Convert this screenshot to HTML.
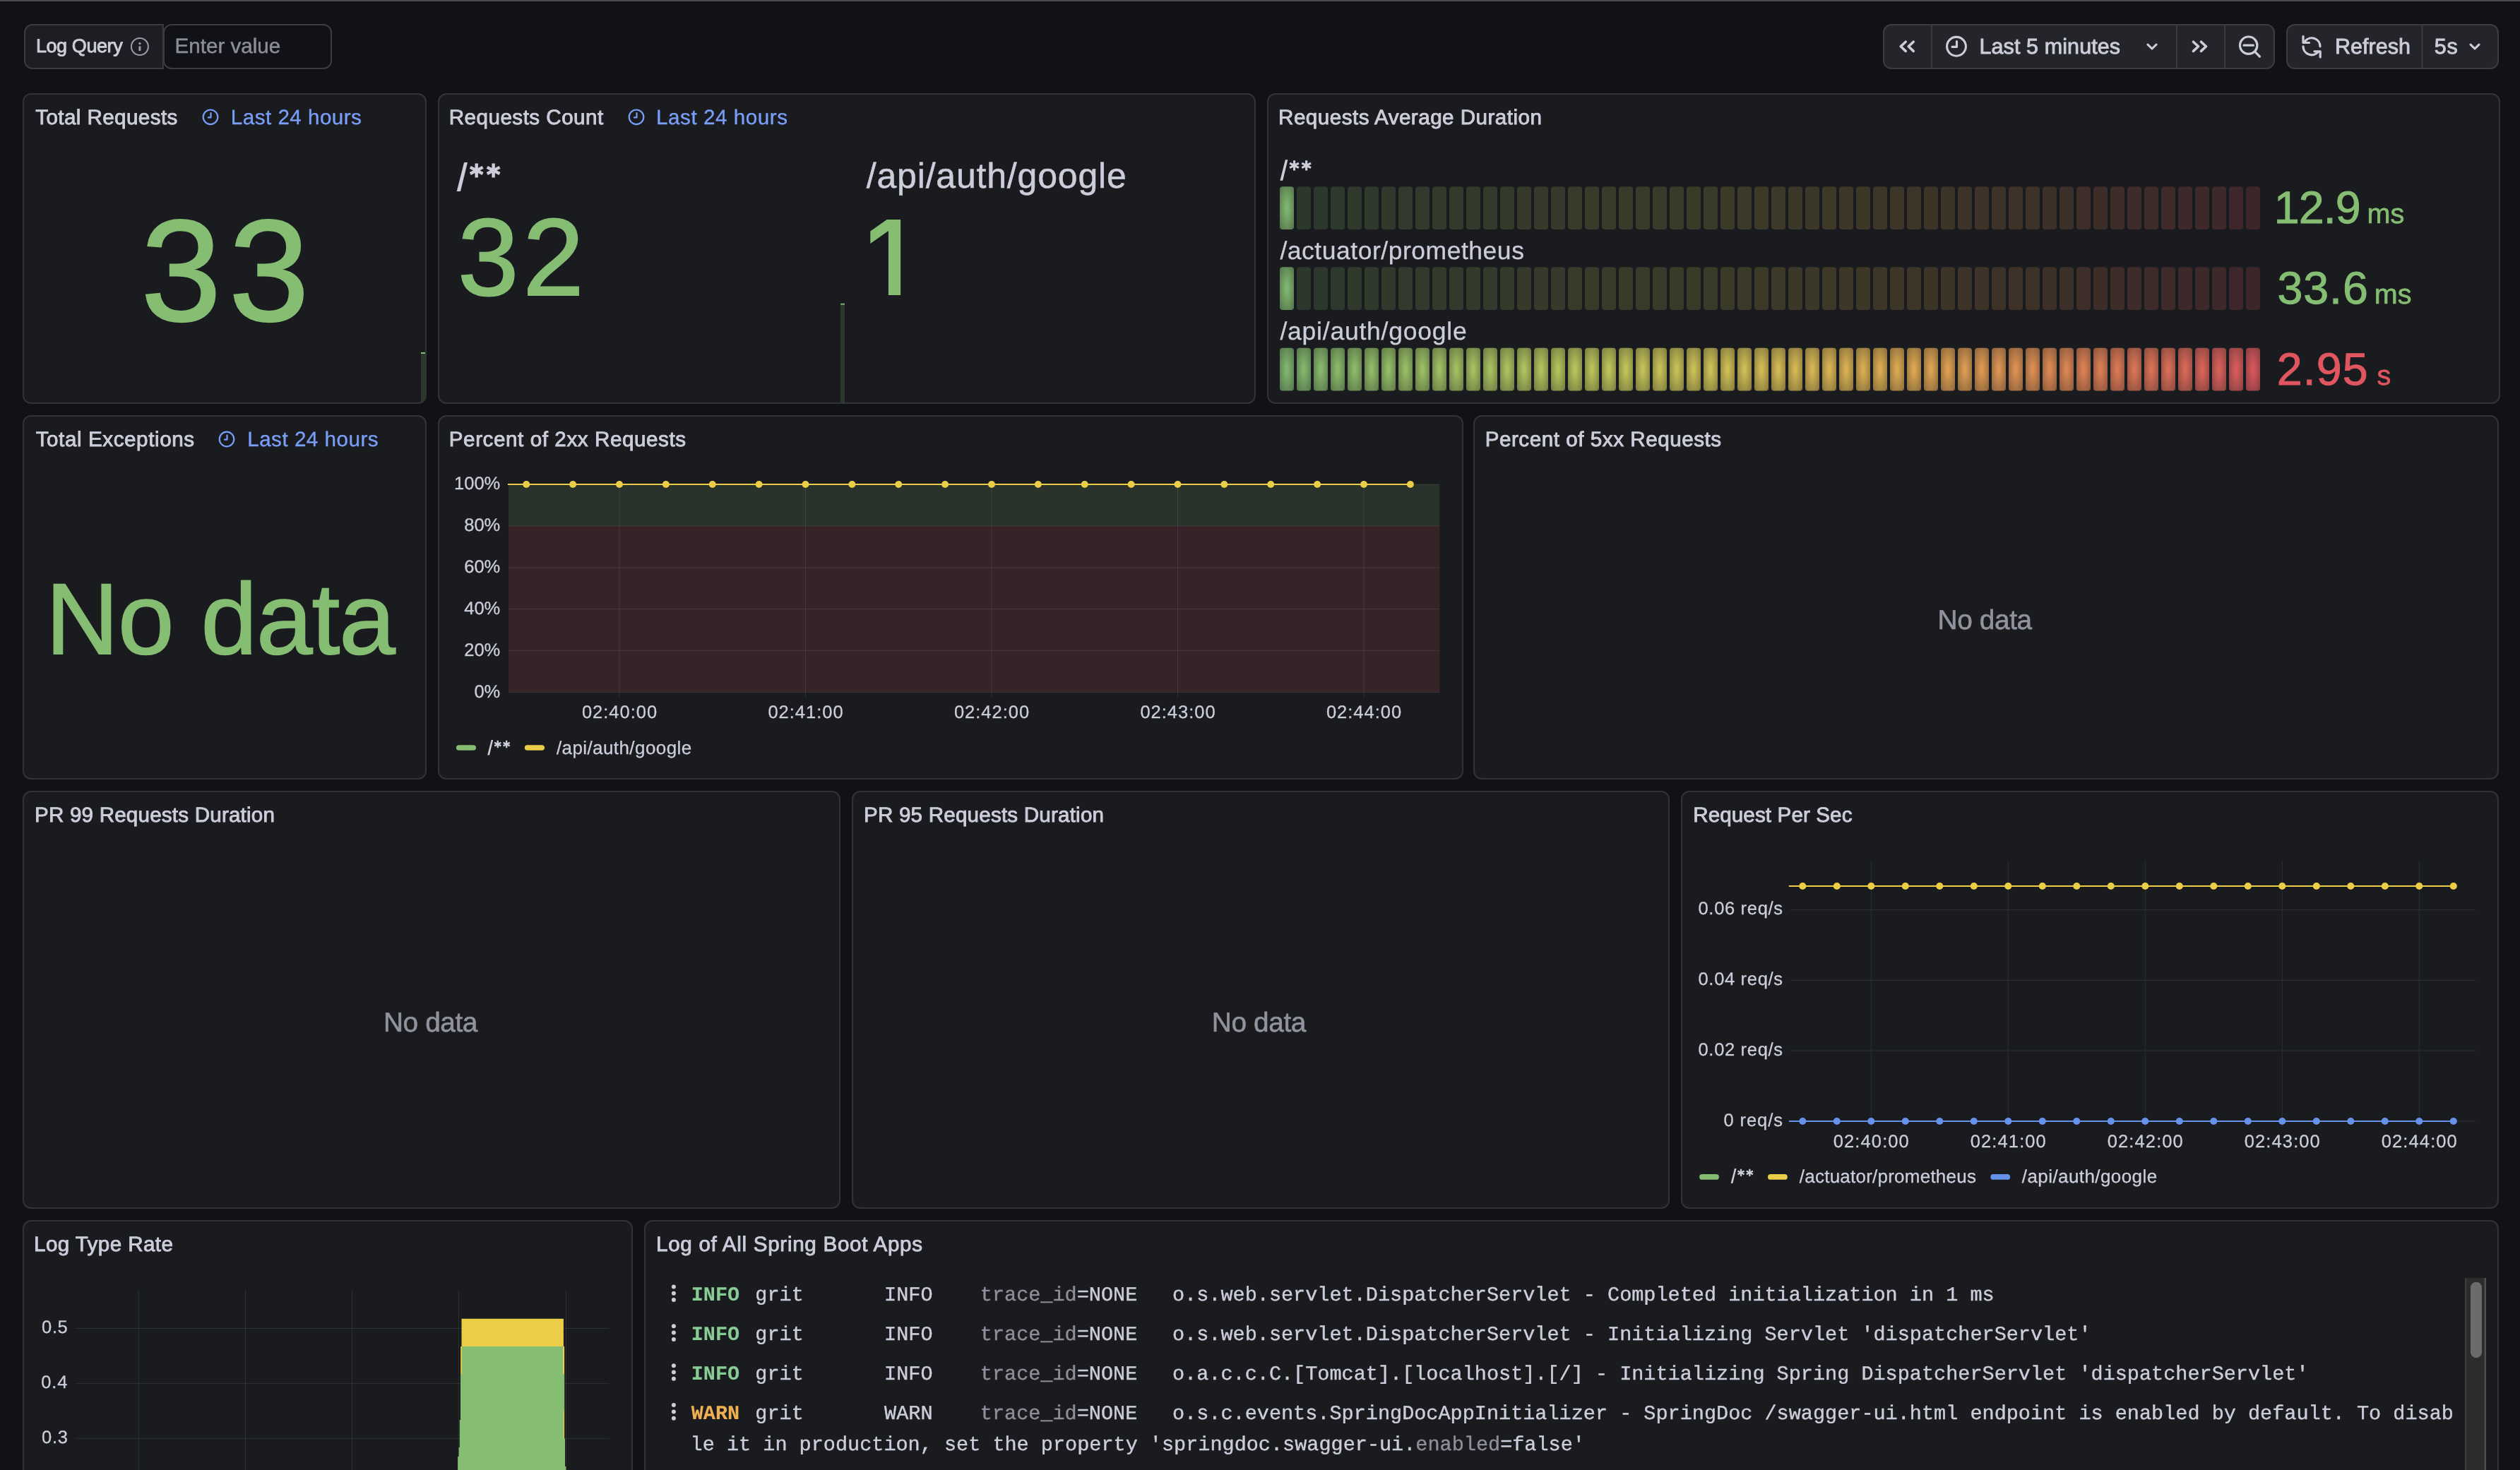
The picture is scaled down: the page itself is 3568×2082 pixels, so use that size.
<!DOCTYPE html>
<html><head><meta charset="utf-8"><title>Grafana Dashboard</title>
<style>html,body{margin:0;padding:0;background:#111217;overflow:hidden;width:3568px;height:2082px}svg{display:block;width:100vw;height:auto;will-change:transform}</style>
</head><body>
<svg width="3568" height="2082" viewBox="0 0 3568 2082" text-rendering="geometricPrecision">
<rect x="0" y="0" width="3568" height="2082" fill="#111217"/>
<rect x="0" y="0" width="3568" height="2" fill="#4b4d4c"/>
<rect x="0" y="2" width="3568" height="1" fill="#0c0d10"/>
<path d="M46 35 H230.8 V96.9 H46 A11 11 0 0 1 35 85.9 V46 A11 11 0 0 1 46 35 Z" fill="#1d1e23" stroke="#3a3c41" stroke-width="2"/>
<rect x="232.00" y="35.00" width="237.00" height="62.00" fill="#111217" rx="11" stroke="#3a3c41" stroke-width="2" />
<text x="50.89" y="74.35" font-family='"Liberation Sans", sans-serif' font-size="27.00" font-weight="normal" fill="#ccccdb" textLength="122.77" lengthAdjust="spacing" stroke="#ccccdb" stroke-width="0.9" >Log Query</text>
<circle cx="197.9" cy="66" r="12" fill="none" stroke="#9b9ba5" stroke-width="2"/>
<circle cx="197.9" cy="61.6" r="1.7" fill="#9b9ba5"/>
<rect x="196.4" y="65.3" width="3" height="7" rx="1.2" fill="#9b9ba5"/>
<text x="247.58" y="75.40" font-family='"Liberation Sans", sans-serif' font-size="29.50" font-weight="normal" fill="#8c8d97" textLength="149.53" lengthAdjust="spacing" stroke="#8c8d97" stroke-width="0.5" >Enter value</text>
<rect x="2667.00" y="35.00" width="553.00" height="62.00" fill="#23252a" rx="11" stroke="#3a3c41" stroke-width="2" />
<rect x="2734.00" y="35.00" width="2.00" height="62.00" fill="#3a3c41" />
<rect x="3081.00" y="35.00" width="2.00" height="62.00" fill="#3a3c41" />
<rect x="3149.00" y="35.00" width="2.00" height="62.00" fill="#3a3c41" />
<path d="M2698.2 59.199999999999996 L2691.2 65.8 L2698.2 72.39999999999999" fill="none" stroke="#ccccdb" stroke-width="3.6" stroke-linecap="round" stroke-linejoin="round"/>
<path d="M2709.2 59.199999999999996 L2702.2 65.8 L2709.2 72.39999999999999" fill="none" stroke="#ccccdb" stroke-width="3.6" stroke-linecap="round" stroke-linejoin="round"/>
<path d="M3105.5 59.199999999999996 L3112.5 65.8 L3105.5 72.39999999999999" fill="none" stroke="#ccccdb" stroke-width="3.6" stroke-linecap="round" stroke-linejoin="round"/>
<path d="M3116.5 59.199999999999996 L3123.5 65.8 L3116.5 72.39999999999999" fill="none" stroke="#ccccdb" stroke-width="3.6" stroke-linecap="round" stroke-linejoin="round"/>
<circle cx="2770" cy="65.8" r="13.4" fill="none" stroke="#ccccdb" stroke-width="3.1"/>
<path d="M2770.5 58.42999999999999 V66.39999999999999 H2763.97" fill="none" stroke="#ccccdb" stroke-width="3.1" stroke-linecap="round" stroke-linejoin="round"/>
<text x="2802.50" y="76.00" font-family='"Liberation Sans", sans-serif' font-size="30.50" font-weight="normal" fill="#ccccdb" textLength="199.60" lengthAdjust="spacing" stroke="#ccccdb" stroke-width="0.9" >Last 5 minutes</text>
<path d="M3041 63.2 L3047 69 L3053 63.2" fill="none" stroke="#ccccdb" stroke-width="3.1" stroke-linecap="round" stroke-linejoin="round"/>
<circle cx="3183.7" cy="64.2" r="12.2" fill="none" stroke="#ccccdb" stroke-width="3.2"/>
<path d="M3177 64.2 H3190.4 M3192.6 73.2 L3199.4 80" fill="none" stroke="#ccccdb" stroke-width="3.2" stroke-linecap="round"/>
<rect x="3238.00" y="35.00" width="299.00" height="62.00" fill="#23252a" rx="11" stroke="#3a3c41" stroke-width="2" />
<rect x="3428.50" y="35.00" width="2.00" height="62.00" fill="#3a3c41" />
<path d="M3263.8 58.1 A12 12 0 0 1 3285 65.8 M3261 65.8 A12 12 0 0 0 3282.2 73.5" fill="none" stroke="#ccccdb" stroke-width="3.2" stroke-linecap="round"/>
<path d="M3261 51.5 V60.5 H3269.5 M3277 72.8 H3285.2 V81" fill="none" stroke="#ccccdb" stroke-width="3.2" stroke-linecap="round" stroke-linejoin="round"/>
<text x="3306.00" y="76.00" font-family='"Liberation Sans", sans-serif' font-size="30.50" font-weight="normal" fill="#ccccdb" textLength="106.98" lengthAdjust="spacing" stroke="#ccccdb" stroke-width="0.9" >Refresh</text>
<text x="3446.78" y="76.00" font-family='"Liberation Sans", sans-serif' font-size="30.50" font-weight="normal" fill="#ccccdb" textLength="32.92" lengthAdjust="spacing" stroke="#ccccdb" stroke-width="0.9" >5s</text>
<path d="M3498 63.2 L3504 69 L3510 63.2" fill="none" stroke="#ccccdb" stroke-width="3.1" stroke-linecap="round" stroke-linejoin="round"/>
<rect x="33.00" y="133.00" width="570.00" height="438.00" fill="#191b1f" rx="11" stroke="#323338" stroke-width="2" />
<text x="50.24" y="176.30" font-family='"Liberation Sans", sans-serif' font-size="29.60" font-weight="normal" fill="#ccccdb" textLength="201.13" lengthAdjust="spacing" stroke="#ccccdb" stroke-width="0.9" >Total Requests</text>
<circle cx="298" cy="165.8" r="10.3" fill="none" stroke="#799ef8" stroke-width="2.2"/>
<path d="M298.5 160.13500000000002 V166.4 H294.91" fill="none" stroke="#799ef8" stroke-width="2.2" stroke-linecap="round" stroke-linejoin="round"/>
<text x="326.87" y="176.30" font-family='"Liberation Sans", sans-serif' font-size="29.60" font-weight="normal" fill="#799ef8" textLength="185.00" lengthAdjust="spacing" stroke="#799ef8" stroke-width="0.35" >Last 24 hours</text>
<text x="199.62" y="454.00" font-family='"Liberation Sans", sans-serif' font-size="204.40" font-weight="normal" fill="#85bd72" textLength="238.17" lengthAdjust="spacing" stroke="#85bd72" stroke-width="2.4" >33</text>
<clipPath id="p1c"><rect x="34" y="134" width="568" height="436" rx="10"/></clipPath>
<g clip-path="url(#p1c)">
<rect x="596.00" y="500.50" width="6.00" height="72.00" fill="#85bd72" fill-opacity="0.18"/>
<rect x="596.00" y="499.00" width="6.00" height="2.00" fill="#85bd72" />
</g>
<rect x="621.00" y="133.00" width="1156.00" height="438.00" fill="#191b1f" rx="11" stroke="#323338" stroke-width="2" />
<text x="635.77" y="176.30" font-family='"Liberation Sans", sans-serif' font-size="29.60" font-weight="normal" fill="#ccccdb" textLength="218.44" lengthAdjust="spacing" stroke="#ccccdb" stroke-width="0.9" >Requests Count</text>
<circle cx="901" cy="165.8" r="10.3" fill="none" stroke="#799ef8" stroke-width="2.2"/>
<path d="M901.5 160.13500000000002 V166.4 H897.91" fill="none" stroke="#799ef8" stroke-width="2.2" stroke-linecap="round" stroke-linejoin="round"/>
<text x="929.07" y="176.30" font-family='"Liberation Sans", sans-serif' font-size="29.60" font-weight="normal" fill="#799ef8" textLength="186.00" lengthAdjust="spacing" stroke="#799ef8" stroke-width="0.35" >Last 24 hours</text>
<path d="M657.10 230.00 L662.00 230.00 L652.00 271.00 L646.70 271.00 Z" fill="#ccccdb"/>
<path d="M674.70 231.40 L674.70 251.40 M665.79 236.86 L683.61 245.94 M665.79 245.94 L683.61 236.86 " stroke="#ccccdb" stroke-width="4.40" fill="none"/>
<path d="M698.60 231.40 L698.60 251.40 M689.69 236.86 L707.51 245.94 M689.69 245.94 L707.51 236.86 " stroke="#ccccdb" stroke-width="4.40" fill="none"/>
<text x="1226.80" y="266.20" font-family='"Liberation Sans", sans-serif' font-size="50.00" font-weight="normal" fill="#ccccdb" textLength="367.92" lengthAdjust="spacing" stroke="#ccccdb" stroke-width="0.5" >/api/auth/google</text>
<text x="647.88" y="417.80" font-family='"Liberation Sans", sans-serif' font-size="155.50" font-weight="normal" fill="#85bd72" textLength="178.84" lengthAdjust="spacing" stroke="#85bd72" stroke-width="2.0" >32</text>
<path d="M1232.3 327.6 L1255.7 310.9 H1275.1 V418.1 H1257.9 V327 L1232.3 344.9 Z" fill="#85bd72"/>
<rect x="1190.00" y="431.20" width="6.00" height="139.00" fill="#85bd72" fill-opacity="0.18"/>
<rect x="1190.00" y="429.80" width="6.00" height="1.80" fill="#85bd72" />
<rect x="1795.00" y="133.00" width="1744.00" height="438.00" fill="#191b1f" rx="11" stroke="#323338" stroke-width="2" />
<text x="1810.07" y="176.30" font-family='"Liberation Sans", sans-serif' font-size="29.60" font-weight="normal" fill="#ccccdb" textLength="372.85" lengthAdjust="spacing" stroke="#ccccdb" stroke-width="0.9" >Requests Average Duration</text>
<path d="M1819.87 226.20 L1823.39 226.20 L1816.21 255.64 L1812.40 255.64 Z" fill="#ccccdb"/>
<path d="M1832.50 227.21 L1832.50 241.57 M1826.11 231.13 L1838.90 237.64 M1826.11 237.64 L1838.90 231.13 " stroke="#ccccdb" stroke-width="3.16" fill="none"/>
<path d="M1849.66 227.21 L1849.66 241.57 M1843.27 231.13 L1856.06 237.64 M1843.27 237.64 L1856.06 231.13 " stroke="#ccccdb" stroke-width="3.16" fill="none"/>
<rect x="1812.00" y="264.30" width="20.00" height="60.60" fill="url(#g0_0)" rx="4" />
<rect x="1836.00" y="264.30" width="20.00" height="60.60" fill="rgb(136,190,113)" rx="4" fill-opacity="0.18"/>
<rect x="1860.00" y="264.30" width="20.00" height="60.60" fill="rgb(140,191,112)" rx="4" fill-opacity="0.18"/>
<rect x="1884.00" y="264.30" width="20.00" height="60.60" fill="rgb(143,192,110)" rx="4" fill-opacity="0.18"/>
<rect x="1908.00" y="264.30" width="20.00" height="60.60" fill="rgb(147,193,108)" rx="4" fill-opacity="0.18"/>
<rect x="1932.00" y="264.30" width="20.00" height="60.60" fill="rgb(150,194,107)" rx="4" fill-opacity="0.18"/>
<rect x="1956.00" y="264.30" width="20.00" height="60.60" fill="rgb(154,196,105)" rx="4" fill-opacity="0.18"/>
<rect x="1980.00" y="264.30" width="20.00" height="60.60" fill="rgb(158,197,104)" rx="4" fill-opacity="0.18"/>
<rect x="2004.00" y="264.30" width="20.00" height="60.60" fill="rgb(162,198,103)" rx="4" fill-opacity="0.18"/>
<rect x="2028.00" y="264.30" width="20.00" height="60.60" fill="rgb(165,199,102)" rx="4" fill-opacity="0.18"/>
<rect x="2052.00" y="264.30" width="20.00" height="60.60" fill="rgb(169,199,100)" rx="4" fill-opacity="0.18"/>
<rect x="2076.00" y="264.30" width="20.00" height="60.60" fill="rgb(172,200,99)" rx="4" fill-opacity="0.18"/>
<rect x="2100.00" y="264.30" width="20.00" height="60.60" fill="rgb(175,201,98)" rx="4" fill-opacity="0.18"/>
<rect x="2124.00" y="264.30" width="20.00" height="60.60" fill="rgb(179,201,97)" rx="4" fill-opacity="0.18"/>
<rect x="2148.00" y="264.30" width="20.00" height="60.60" fill="rgb(182,202,97)" rx="4" fill-opacity="0.18"/>
<rect x="2172.00" y="264.30" width="20.00" height="60.60" fill="rgb(186,202,95)" rx="4" fill-opacity="0.18"/>
<rect x="2196.00" y="264.30" width="20.00" height="60.60" fill="rgb(188,202,94)" rx="4" fill-opacity="0.18"/>
<rect x="2220.00" y="264.30" width="20.00" height="60.60" fill="rgb(192,203,94)" rx="4" fill-opacity="0.18"/>
<rect x="2244.00" y="264.30" width="20.00" height="60.60" fill="rgb(195,203,92)" rx="4" fill-opacity="0.18"/>
<rect x="2268.00" y="264.30" width="20.00" height="60.60" fill="rgb(198,203,92)" rx="4" fill-opacity="0.18"/>
<rect x="2292.00" y="264.30" width="20.00" height="60.60" fill="rgb(201,203,91)" rx="4" fill-opacity="0.18"/>
<rect x="2316.00" y="264.30" width="20.00" height="60.60" fill="rgb(204,202,91)" rx="4" fill-opacity="0.18"/>
<rect x="2340.00" y="264.30" width="20.00" height="60.60" fill="rgb(206,201,90)" rx="4" fill-opacity="0.18"/>
<rect x="2364.00" y="264.30" width="20.00" height="60.60" fill="rgb(208,201,89)" rx="4" fill-opacity="0.18"/>
<rect x="2388.00" y="264.30" width="20.00" height="60.60" fill="rgb(211,200,89)" rx="4" fill-opacity="0.18"/>
<rect x="2412.00" y="264.30" width="20.00" height="60.60" fill="rgb(213,200,88)" rx="4" fill-opacity="0.18"/>
<rect x="2436.00" y="264.30" width="20.00" height="60.60" fill="rgb(215,198,87)" rx="4" fill-opacity="0.18"/>
<rect x="2460.00" y="264.30" width="20.00" height="60.60" fill="rgb(217,197,87)" rx="4" fill-opacity="0.18"/>
<rect x="2484.00" y="264.30" width="20.00" height="60.60" fill="rgb(219,195,87)" rx="4" fill-opacity="0.18"/>
<rect x="2508.00" y="264.30" width="20.00" height="60.60" fill="rgb(220,193,86)" rx="4" fill-opacity="0.18"/>
<rect x="2532.00" y="264.30" width="20.00" height="60.60" fill="rgb(222,191,86)" rx="4" fill-opacity="0.18"/>
<rect x="2556.00" y="264.30" width="20.00" height="60.60" fill="rgb(223,190,86)" rx="4" fill-opacity="0.18"/>
<rect x="2580.00" y="264.30" width="20.00" height="60.60" fill="rgb(225,187,85)" rx="4" fill-opacity="0.18"/>
<rect x="2604.00" y="264.30" width="20.00" height="60.60" fill="rgb(226,184,85)" rx="4" fill-opacity="0.18"/>
<rect x="2628.00" y="264.30" width="20.00" height="60.60" fill="rgb(226,181,84)" rx="4" fill-opacity="0.18"/>
<rect x="2652.00" y="264.30" width="20.00" height="60.60" fill="rgb(227,178,84)" rx="4" fill-opacity="0.18"/>
<rect x="2676.00" y="264.30" width="20.00" height="60.60" fill="rgb(228,176,84)" rx="4" fill-opacity="0.18"/>
<rect x="2700.00" y="264.30" width="20.00" height="60.60" fill="rgb(229,173,84)" rx="4" fill-opacity="0.18"/>
<rect x="2724.00" y="264.30" width="20.00" height="60.60" fill="rgb(229,169,84)" rx="4" fill-opacity="0.18"/>
<rect x="2748.00" y="264.30" width="20.00" height="60.60" fill="rgb(230,165,84)" rx="4" fill-opacity="0.18"/>
<rect x="2772.00" y="264.30" width="20.00" height="60.60" fill="rgb(229,162,84)" rx="4" fill-opacity="0.18"/>
<rect x="2796.00" y="264.30" width="20.00" height="60.60" fill="rgb(230,158,84)" rx="4" fill-opacity="0.18"/>
<rect x="2820.00" y="264.30" width="20.00" height="60.60" fill="rgb(229,154,85)" rx="4" fill-opacity="0.18"/>
<rect x="2844.00" y="264.30" width="20.00" height="60.60" fill="rgb(230,151,85)" rx="4" fill-opacity="0.18"/>
<rect x="2868.00" y="264.30" width="20.00" height="60.60" fill="rgb(229,147,85)" rx="4" fill-opacity="0.18"/>
<rect x="2892.00" y="264.30" width="20.00" height="60.60" fill="rgb(229,142,85)" rx="4" fill-opacity="0.18"/>
<rect x="2916.00" y="264.30" width="20.00" height="60.60" fill="rgb(229,139,86)" rx="4" fill-opacity="0.18"/>
<rect x="2940.00" y="264.30" width="20.00" height="60.60" fill="rgb(229,134,86)" rx="4" fill-opacity="0.18"/>
<rect x="2964.00" y="264.30" width="20.00" height="60.60" fill="rgb(228,130,87)" rx="4" fill-opacity="0.18"/>
<rect x="2988.00" y="264.30" width="20.00" height="60.60" fill="rgb(228,125,87)" rx="4" fill-opacity="0.18"/>
<rect x="3012.00" y="264.30" width="20.00" height="60.60" fill="rgb(228,121,88)" rx="4" fill-opacity="0.18"/>
<rect x="3036.00" y="264.30" width="20.00" height="60.60" fill="rgb(227,117,89)" rx="4" fill-opacity="0.18"/>
<rect x="3060.00" y="264.30" width="20.00" height="60.60" fill="rgb(226,113,90)" rx="4" fill-opacity="0.18"/>
<rect x="3084.00" y="264.30" width="20.00" height="60.60" fill="rgb(226,108,90)" rx="4" fill-opacity="0.18"/>
<rect x="3108.00" y="264.30" width="20.00" height="60.60" fill="rgb(225,103,92)" rx="4" fill-opacity="0.18"/>
<rect x="3132.00" y="264.30" width="20.00" height="60.60" fill="rgb(225,99,93)" rx="4" fill-opacity="0.18"/>
<rect x="3156.00" y="264.30" width="20.00" height="60.60" fill="rgb(225,95,94)" rx="4" fill-opacity="0.18"/>
<rect x="3180.00" y="264.30" width="20.00" height="60.60" fill="rgb(224,90,95)" rx="4" fill-opacity="0.18"/>
<text x="1812.40" y="367.10" font-family='"Liberation Sans", sans-serif' font-size="35.50" font-weight="normal" fill="#ccccdb" textLength="345.48" lengthAdjust="spacing" stroke="#ccccdb" stroke-width="0.3" >/actuator/prometheus</text>
<rect x="1812.00" y="378.30" width="20.00" height="60.60" fill="url(#g1_0)" rx="4" />
<rect x="1836.00" y="378.30" width="20.00" height="60.60" fill="rgb(136,190,113)" rx="4" fill-opacity="0.18"/>
<rect x="1860.00" y="378.30" width="20.00" height="60.60" fill="rgb(140,191,112)" rx="4" fill-opacity="0.18"/>
<rect x="1884.00" y="378.30" width="20.00" height="60.60" fill="rgb(143,192,110)" rx="4" fill-opacity="0.18"/>
<rect x="1908.00" y="378.30" width="20.00" height="60.60" fill="rgb(147,193,108)" rx="4" fill-opacity="0.18"/>
<rect x="1932.00" y="378.30" width="20.00" height="60.60" fill="rgb(150,194,107)" rx="4" fill-opacity="0.18"/>
<rect x="1956.00" y="378.30" width="20.00" height="60.60" fill="rgb(154,196,105)" rx="4" fill-opacity="0.18"/>
<rect x="1980.00" y="378.30" width="20.00" height="60.60" fill="rgb(158,197,104)" rx="4" fill-opacity="0.18"/>
<rect x="2004.00" y="378.30" width="20.00" height="60.60" fill="rgb(162,198,103)" rx="4" fill-opacity="0.18"/>
<rect x="2028.00" y="378.30" width="20.00" height="60.60" fill="rgb(165,199,102)" rx="4" fill-opacity="0.18"/>
<rect x="2052.00" y="378.30" width="20.00" height="60.60" fill="rgb(169,199,100)" rx="4" fill-opacity="0.18"/>
<rect x="2076.00" y="378.30" width="20.00" height="60.60" fill="rgb(172,200,99)" rx="4" fill-opacity="0.18"/>
<rect x="2100.00" y="378.30" width="20.00" height="60.60" fill="rgb(175,201,98)" rx="4" fill-opacity="0.18"/>
<rect x="2124.00" y="378.30" width="20.00" height="60.60" fill="rgb(179,201,97)" rx="4" fill-opacity="0.18"/>
<rect x="2148.00" y="378.30" width="20.00" height="60.60" fill="rgb(182,202,97)" rx="4" fill-opacity="0.18"/>
<rect x="2172.00" y="378.30" width="20.00" height="60.60" fill="rgb(186,202,95)" rx="4" fill-opacity="0.18"/>
<rect x="2196.00" y="378.30" width="20.00" height="60.60" fill="rgb(188,202,94)" rx="4" fill-opacity="0.18"/>
<rect x="2220.00" y="378.30" width="20.00" height="60.60" fill="rgb(192,203,94)" rx="4" fill-opacity="0.18"/>
<rect x="2244.00" y="378.30" width="20.00" height="60.60" fill="rgb(195,203,92)" rx="4" fill-opacity="0.18"/>
<rect x="2268.00" y="378.30" width="20.00" height="60.60" fill="rgb(198,203,92)" rx="4" fill-opacity="0.18"/>
<rect x="2292.00" y="378.30" width="20.00" height="60.60" fill="rgb(201,203,91)" rx="4" fill-opacity="0.18"/>
<rect x="2316.00" y="378.30" width="20.00" height="60.60" fill="rgb(204,202,91)" rx="4" fill-opacity="0.18"/>
<rect x="2340.00" y="378.30" width="20.00" height="60.60" fill="rgb(206,201,90)" rx="4" fill-opacity="0.18"/>
<rect x="2364.00" y="378.30" width="20.00" height="60.60" fill="rgb(208,201,89)" rx="4" fill-opacity="0.18"/>
<rect x="2388.00" y="378.30" width="20.00" height="60.60" fill="rgb(211,200,89)" rx="4" fill-opacity="0.18"/>
<rect x="2412.00" y="378.30" width="20.00" height="60.60" fill="rgb(213,200,88)" rx="4" fill-opacity="0.18"/>
<rect x="2436.00" y="378.30" width="20.00" height="60.60" fill="rgb(215,198,87)" rx="4" fill-opacity="0.18"/>
<rect x="2460.00" y="378.30" width="20.00" height="60.60" fill="rgb(217,197,87)" rx="4" fill-opacity="0.18"/>
<rect x="2484.00" y="378.30" width="20.00" height="60.60" fill="rgb(219,195,87)" rx="4" fill-opacity="0.18"/>
<rect x="2508.00" y="378.30" width="20.00" height="60.60" fill="rgb(220,193,86)" rx="4" fill-opacity="0.18"/>
<rect x="2532.00" y="378.30" width="20.00" height="60.60" fill="rgb(222,191,86)" rx="4" fill-opacity="0.18"/>
<rect x="2556.00" y="378.30" width="20.00" height="60.60" fill="rgb(223,190,86)" rx="4" fill-opacity="0.18"/>
<rect x="2580.00" y="378.30" width="20.00" height="60.60" fill="rgb(225,187,85)" rx="4" fill-opacity="0.18"/>
<rect x="2604.00" y="378.30" width="20.00" height="60.60" fill="rgb(226,184,85)" rx="4" fill-opacity="0.18"/>
<rect x="2628.00" y="378.30" width="20.00" height="60.60" fill="rgb(226,181,84)" rx="4" fill-opacity="0.18"/>
<rect x="2652.00" y="378.30" width="20.00" height="60.60" fill="rgb(227,178,84)" rx="4" fill-opacity="0.18"/>
<rect x="2676.00" y="378.30" width="20.00" height="60.60" fill="rgb(228,176,84)" rx="4" fill-opacity="0.18"/>
<rect x="2700.00" y="378.30" width="20.00" height="60.60" fill="rgb(229,173,84)" rx="4" fill-opacity="0.18"/>
<rect x="2724.00" y="378.30" width="20.00" height="60.60" fill="rgb(229,169,84)" rx="4" fill-opacity="0.18"/>
<rect x="2748.00" y="378.30" width="20.00" height="60.60" fill="rgb(230,165,84)" rx="4" fill-opacity="0.18"/>
<rect x="2772.00" y="378.30" width="20.00" height="60.60" fill="rgb(229,162,84)" rx="4" fill-opacity="0.18"/>
<rect x="2796.00" y="378.30" width="20.00" height="60.60" fill="rgb(230,158,84)" rx="4" fill-opacity="0.18"/>
<rect x="2820.00" y="378.30" width="20.00" height="60.60" fill="rgb(229,154,85)" rx="4" fill-opacity="0.18"/>
<rect x="2844.00" y="378.30" width="20.00" height="60.60" fill="rgb(230,151,85)" rx="4" fill-opacity="0.18"/>
<rect x="2868.00" y="378.30" width="20.00" height="60.60" fill="rgb(229,147,85)" rx="4" fill-opacity="0.18"/>
<rect x="2892.00" y="378.30" width="20.00" height="60.60" fill="rgb(229,142,85)" rx="4" fill-opacity="0.18"/>
<rect x="2916.00" y="378.30" width="20.00" height="60.60" fill="rgb(229,139,86)" rx="4" fill-opacity="0.18"/>
<rect x="2940.00" y="378.30" width="20.00" height="60.60" fill="rgb(229,134,86)" rx="4" fill-opacity="0.18"/>
<rect x="2964.00" y="378.30" width="20.00" height="60.60" fill="rgb(228,130,87)" rx="4" fill-opacity="0.18"/>
<rect x="2988.00" y="378.30" width="20.00" height="60.60" fill="rgb(228,125,87)" rx="4" fill-opacity="0.18"/>
<rect x="3012.00" y="378.30" width="20.00" height="60.60" fill="rgb(228,121,88)" rx="4" fill-opacity="0.18"/>
<rect x="3036.00" y="378.30" width="20.00" height="60.60" fill="rgb(227,117,89)" rx="4" fill-opacity="0.18"/>
<rect x="3060.00" y="378.30" width="20.00" height="60.60" fill="rgb(226,113,90)" rx="4" fill-opacity="0.18"/>
<rect x="3084.00" y="378.30" width="20.00" height="60.60" fill="rgb(226,108,90)" rx="4" fill-opacity="0.18"/>
<rect x="3108.00" y="378.30" width="20.00" height="60.60" fill="rgb(225,103,92)" rx="4" fill-opacity="0.18"/>
<rect x="3132.00" y="378.30" width="20.00" height="60.60" fill="rgb(225,99,93)" rx="4" fill-opacity="0.18"/>
<rect x="3156.00" y="378.30" width="20.00" height="60.60" fill="rgb(225,95,94)" rx="4" fill-opacity="0.18"/>
<rect x="3180.00" y="378.30" width="20.00" height="60.60" fill="rgb(224,90,95)" rx="4" fill-opacity="0.18"/>
<text x="1812.40" y="480.50" font-family='"Liberation Sans", sans-serif' font-size="35.50" font-weight="normal" fill="#ccccdb" textLength="264.38" lengthAdjust="spacing" stroke="#ccccdb" stroke-width="0.3" >/api/auth/google</text>
<rect x="1812.00" y="492.80" width="20.00" height="60.60" fill="url(#g2_0)" rx="4" />
<rect x="1836.00" y="492.80" width="20.00" height="60.60" fill="url(#g2_1)" rx="4" />
<rect x="1860.00" y="492.80" width="20.00" height="60.60" fill="url(#g2_2)" rx="4" />
<rect x="1884.00" y="492.80" width="20.00" height="60.60" fill="url(#g2_3)" rx="4" />
<rect x="1908.00" y="492.80" width="20.00" height="60.60" fill="url(#g2_4)" rx="4" />
<rect x="1932.00" y="492.80" width="20.00" height="60.60" fill="url(#g2_5)" rx="4" />
<rect x="1956.00" y="492.80" width="20.00" height="60.60" fill="url(#g2_6)" rx="4" />
<rect x="1980.00" y="492.80" width="20.00" height="60.60" fill="url(#g2_7)" rx="4" />
<rect x="2004.00" y="492.80" width="20.00" height="60.60" fill="url(#g2_8)" rx="4" />
<rect x="2028.00" y="492.80" width="20.00" height="60.60" fill="url(#g2_9)" rx="4" />
<rect x="2052.00" y="492.80" width="20.00" height="60.60" fill="url(#g2_10)" rx="4" />
<rect x="2076.00" y="492.80" width="20.00" height="60.60" fill="url(#g2_11)" rx="4" />
<rect x="2100.00" y="492.80" width="20.00" height="60.60" fill="url(#g2_12)" rx="4" />
<rect x="2124.00" y="492.80" width="20.00" height="60.60" fill="url(#g2_13)" rx="4" />
<rect x="2148.00" y="492.80" width="20.00" height="60.60" fill="url(#g2_14)" rx="4" />
<rect x="2172.00" y="492.80" width="20.00" height="60.60" fill="url(#g2_15)" rx="4" />
<rect x="2196.00" y="492.80" width="20.00" height="60.60" fill="url(#g2_16)" rx="4" />
<rect x="2220.00" y="492.80" width="20.00" height="60.60" fill="url(#g2_17)" rx="4" />
<rect x="2244.00" y="492.80" width="20.00" height="60.60" fill="url(#g2_18)" rx="4" />
<rect x="2268.00" y="492.80" width="20.00" height="60.60" fill="url(#g2_19)" rx="4" />
<rect x="2292.00" y="492.80" width="20.00" height="60.60" fill="url(#g2_20)" rx="4" />
<rect x="2316.00" y="492.80" width="20.00" height="60.60" fill="url(#g2_21)" rx="4" />
<rect x="2340.00" y="492.80" width="20.00" height="60.60" fill="url(#g2_22)" rx="4" />
<rect x="2364.00" y="492.80" width="20.00" height="60.60" fill="url(#g2_23)" rx="4" />
<rect x="2388.00" y="492.80" width="20.00" height="60.60" fill="url(#g2_24)" rx="4" />
<rect x="2412.00" y="492.80" width="20.00" height="60.60" fill="url(#g2_25)" rx="4" />
<rect x="2436.00" y="492.80" width="20.00" height="60.60" fill="url(#g2_26)" rx="4" />
<rect x="2460.00" y="492.80" width="20.00" height="60.60" fill="url(#g2_27)" rx="4" />
<rect x="2484.00" y="492.80" width="20.00" height="60.60" fill="url(#g2_28)" rx="4" />
<rect x="2508.00" y="492.80" width="20.00" height="60.60" fill="url(#g2_29)" rx="4" />
<rect x="2532.00" y="492.80" width="20.00" height="60.60" fill="url(#g2_30)" rx="4" />
<rect x="2556.00" y="492.80" width="20.00" height="60.60" fill="url(#g2_31)" rx="4" />
<rect x="2580.00" y="492.80" width="20.00" height="60.60" fill="url(#g2_32)" rx="4" />
<rect x="2604.00" y="492.80" width="20.00" height="60.60" fill="url(#g2_33)" rx="4" />
<rect x="2628.00" y="492.80" width="20.00" height="60.60" fill="url(#g2_34)" rx="4" />
<rect x="2652.00" y="492.80" width="20.00" height="60.60" fill="url(#g2_35)" rx="4" />
<rect x="2676.00" y="492.80" width="20.00" height="60.60" fill="url(#g2_36)" rx="4" />
<rect x="2700.00" y="492.80" width="20.00" height="60.60" fill="url(#g2_37)" rx="4" />
<rect x="2724.00" y="492.80" width="20.00" height="60.60" fill="url(#g2_38)" rx="4" />
<rect x="2748.00" y="492.80" width="20.00" height="60.60" fill="url(#g2_39)" rx="4" />
<rect x="2772.00" y="492.80" width="20.00" height="60.60" fill="url(#g2_40)" rx="4" />
<rect x="2796.00" y="492.80" width="20.00" height="60.60" fill="url(#g2_41)" rx="4" />
<rect x="2820.00" y="492.80" width="20.00" height="60.60" fill="url(#g2_42)" rx="4" />
<rect x="2844.00" y="492.80" width="20.00" height="60.60" fill="url(#g2_43)" rx="4" />
<rect x="2868.00" y="492.80" width="20.00" height="60.60" fill="url(#g2_44)" rx="4" />
<rect x="2892.00" y="492.80" width="20.00" height="60.60" fill="url(#g2_45)" rx="4" />
<rect x="2916.00" y="492.80" width="20.00" height="60.60" fill="url(#g2_46)" rx="4" />
<rect x="2940.00" y="492.80" width="20.00" height="60.60" fill="url(#g2_47)" rx="4" />
<rect x="2964.00" y="492.80" width="20.00" height="60.60" fill="url(#g2_48)" rx="4" />
<rect x="2988.00" y="492.80" width="20.00" height="60.60" fill="url(#g2_49)" rx="4" />
<rect x="3012.00" y="492.80" width="20.00" height="60.60" fill="url(#g2_50)" rx="4" />
<rect x="3036.00" y="492.80" width="20.00" height="60.60" fill="url(#g2_51)" rx="4" />
<rect x="3060.00" y="492.80" width="20.00" height="60.60" fill="url(#g2_52)" rx="4" />
<rect x="3084.00" y="492.80" width="20.00" height="60.60" fill="url(#g2_53)" rx="4" />
<rect x="3108.00" y="492.80" width="20.00" height="60.60" fill="url(#g2_54)" rx="4" />
<rect x="3132.00" y="492.80" width="20.00" height="60.60" fill="url(#g2_55)" rx="4" />
<rect x="3156.00" y="492.80" width="20.00" height="60.60" fill="url(#g2_56)" rx="4" />
<rect x="3180.00" y="492.80" width="20.00" height="60.60" fill="url(#g2_57)" rx="4" />
<defs><radialGradient id="g0_0" cx="0.5" cy="0.5" r="0.7071"><stop offset="0.1" stop-color="rgb(133,189,114)" stop-opacity="0.95"/><stop offset="1" stop-color="rgb(133,189,114)" stop-opacity="0.55"/></radialGradient><radialGradient id="g1_0" cx="0.5" cy="0.5" r="0.7071"><stop offset="0.1" stop-color="rgb(133,189,114)" stop-opacity="0.95"/><stop offset="1" stop-color="rgb(133,189,114)" stop-opacity="0.55"/></radialGradient><radialGradient id="g2_0" cx="0.5" cy="0.5" r="0.7071"><stop offset="0.1" stop-color="rgb(133,189,114)" stop-opacity="0.95"/><stop offset="1" stop-color="rgb(133,189,114)" stop-opacity="0.55"/></radialGradient><radialGradient id="g2_1" cx="0.5" cy="0.5" r="0.7071"><stop offset="0.1" stop-color="rgb(136,190,113)" stop-opacity="0.95"/><stop offset="1" stop-color="rgb(136,190,113)" stop-opacity="0.55"/></radialGradient><radialGradient id="g2_2" cx="0.5" cy="0.5" r="0.7071"><stop offset="0.1" stop-color="rgb(140,191,112)" stop-opacity="0.95"/><stop offset="1" stop-color="rgb(140,191,112)" stop-opacity="0.55"/></radialGradient><radialGradient id="g2_3" cx="0.5" cy="0.5" r="0.7071"><stop offset="0.1" stop-color="rgb(143,192,110)" stop-opacity="0.95"/><stop offset="1" stop-color="rgb(143,192,110)" stop-opacity="0.55"/></radialGradient><radialGradient id="g2_4" cx="0.5" cy="0.5" r="0.7071"><stop offset="0.1" stop-color="rgb(147,193,108)" stop-opacity="0.95"/><stop offset="1" stop-color="rgb(147,193,108)" stop-opacity="0.55"/></radialGradient><radialGradient id="g2_5" cx="0.5" cy="0.5" r="0.7071"><stop offset="0.1" stop-color="rgb(150,194,107)" stop-opacity="0.95"/><stop offset="1" stop-color="rgb(150,194,107)" stop-opacity="0.55"/></radialGradient><radialGradient id="g2_6" cx="0.5" cy="0.5" r="0.7071"><stop offset="0.1" stop-color="rgb(154,196,105)" stop-opacity="0.95"/><stop offset="1" stop-color="rgb(154,196,105)" stop-opacity="0.55"/></radialGradient><radialGradient id="g2_7" cx="0.5" cy="0.5" r="0.7071"><stop offset="0.1" stop-color="rgb(158,197,104)" stop-opacity="0.95"/><stop offset="1" stop-color="rgb(158,197,104)" stop-opacity="0.55"/></radialGradient><radialGradient id="g2_8" cx="0.5" cy="0.5" r="0.7071"><stop offset="0.1" stop-color="rgb(162,198,103)" stop-opacity="0.95"/><stop offset="1" stop-color="rgb(162,198,103)" stop-opacity="0.55"/></radialGradient><radialGradient id="g2_9" cx="0.5" cy="0.5" r="0.7071"><stop offset="0.1" stop-color="rgb(165,199,102)" stop-opacity="0.95"/><stop offset="1" stop-color="rgb(165,199,102)" stop-opacity="0.55"/></radialGradient><radialGradient id="g2_10" cx="0.5" cy="0.5" r="0.7071"><stop offset="0.1" stop-color="rgb(169,199,100)" stop-opacity="0.95"/><stop offset="1" stop-color="rgb(169,199,100)" stop-opacity="0.55"/></radialGradient><radialGradient id="g2_11" cx="0.5" cy="0.5" r="0.7071"><stop offset="0.1" stop-color="rgb(172,200,99)" stop-opacity="0.95"/><stop offset="1" stop-color="rgb(172,200,99)" stop-opacity="0.55"/></radialGradient><radialGradient id="g2_12" cx="0.5" cy="0.5" r="0.7071"><stop offset="0.1" stop-color="rgb(175,201,98)" stop-opacity="0.95"/><stop offset="1" stop-color="rgb(175,201,98)" stop-opacity="0.55"/></radialGradient><radialGradient id="g2_13" cx="0.5" cy="0.5" r="0.7071"><stop offset="0.1" stop-color="rgb(179,201,97)" stop-opacity="0.95"/><stop offset="1" stop-color="rgb(179,201,97)" stop-opacity="0.55"/></radialGradient><radialGradient id="g2_14" cx="0.5" cy="0.5" r="0.7071"><stop offset="0.1" stop-color="rgb(182,202,97)" stop-opacity="0.95"/><stop offset="1" stop-color="rgb(182,202,97)" stop-opacity="0.55"/></radialGradient><radialGradient id="g2_15" cx="0.5" cy="0.5" r="0.7071"><stop offset="0.1" stop-color="rgb(186,202,95)" stop-opacity="0.95"/><stop offset="1" stop-color="rgb(186,202,95)" stop-opacity="0.55"/></radialGradient><radialGradient id="g2_16" cx="0.5" cy="0.5" r="0.7071"><stop offset="0.1" stop-color="rgb(188,202,94)" stop-opacity="0.95"/><stop offset="1" stop-color="rgb(188,202,94)" stop-opacity="0.55"/></radialGradient><radialGradient id="g2_17" cx="0.5" cy="0.5" r="0.7071"><stop offset="0.1" stop-color="rgb(192,203,94)" stop-opacity="0.95"/><stop offset="1" stop-color="rgb(192,203,94)" stop-opacity="0.55"/></radialGradient><radialGradient id="g2_18" cx="0.5" cy="0.5" r="0.7071"><stop offset="0.1" stop-color="rgb(195,203,92)" stop-opacity="0.95"/><stop offset="1" stop-color="rgb(195,203,92)" stop-opacity="0.55"/></radialGradient><radialGradient id="g2_19" cx="0.5" cy="0.5" r="0.7071"><stop offset="0.1" stop-color="rgb(198,203,92)" stop-opacity="0.95"/><stop offset="1" stop-color="rgb(198,203,92)" stop-opacity="0.55"/></radialGradient><radialGradient id="g2_20" cx="0.5" cy="0.5" r="0.7071"><stop offset="0.1" stop-color="rgb(201,203,91)" stop-opacity="0.95"/><stop offset="1" stop-color="rgb(201,203,91)" stop-opacity="0.55"/></radialGradient><radialGradient id="g2_21" cx="0.5" cy="0.5" r="0.7071"><stop offset="0.1" stop-color="rgb(204,202,91)" stop-opacity="0.95"/><stop offset="1" stop-color="rgb(204,202,91)" stop-opacity="0.55"/></radialGradient><radialGradient id="g2_22" cx="0.5" cy="0.5" r="0.7071"><stop offset="0.1" stop-color="rgb(206,201,90)" stop-opacity="0.95"/><stop offset="1" stop-color="rgb(206,201,90)" stop-opacity="0.55"/></radialGradient><radialGradient id="g2_23" cx="0.5" cy="0.5" r="0.7071"><stop offset="0.1" stop-color="rgb(208,201,89)" stop-opacity="0.95"/><stop offset="1" stop-color="rgb(208,201,89)" stop-opacity="0.55"/></radialGradient><radialGradient id="g2_24" cx="0.5" cy="0.5" r="0.7071"><stop offset="0.1" stop-color="rgb(211,200,89)" stop-opacity="0.95"/><stop offset="1" stop-color="rgb(211,200,89)" stop-opacity="0.55"/></radialGradient><radialGradient id="g2_25" cx="0.5" cy="0.5" r="0.7071"><stop offset="0.1" stop-color="rgb(213,200,88)" stop-opacity="0.95"/><stop offset="1" stop-color="rgb(213,200,88)" stop-opacity="0.55"/></radialGradient><radialGradient id="g2_26" cx="0.5" cy="0.5" r="0.7071"><stop offset="0.1" stop-color="rgb(215,198,87)" stop-opacity="0.95"/><stop offset="1" stop-color="rgb(215,198,87)" stop-opacity="0.55"/></radialGradient><radialGradient id="g2_27" cx="0.5" cy="0.5" r="0.7071"><stop offset="0.1" stop-color="rgb(217,197,87)" stop-opacity="0.95"/><stop offset="1" stop-color="rgb(217,197,87)" stop-opacity="0.55"/></radialGradient><radialGradient id="g2_28" cx="0.5" cy="0.5" r="0.7071"><stop offset="0.1" stop-color="rgb(219,195,87)" stop-opacity="0.95"/><stop offset="1" stop-color="rgb(219,195,87)" stop-opacity="0.55"/></radialGradient><radialGradient id="g2_29" cx="0.5" cy="0.5" r="0.7071"><stop offset="0.1" stop-color="rgb(220,193,86)" stop-opacity="0.95"/><stop offset="1" stop-color="rgb(220,193,86)" stop-opacity="0.55"/></radialGradient><radialGradient id="g2_30" cx="0.5" cy="0.5" r="0.7071"><stop offset="0.1" stop-color="rgb(222,191,86)" stop-opacity="0.95"/><stop offset="1" stop-color="rgb(222,191,86)" stop-opacity="0.55"/></radialGradient><radialGradient id="g2_31" cx="0.5" cy="0.5" r="0.7071"><stop offset="0.1" stop-color="rgb(223,190,86)" stop-opacity="0.95"/><stop offset="1" stop-color="rgb(223,190,86)" stop-opacity="0.55"/></radialGradient><radialGradient id="g2_32" cx="0.5" cy="0.5" r="0.7071"><stop offset="0.1" stop-color="rgb(225,187,85)" stop-opacity="0.95"/><stop offset="1" stop-color="rgb(225,187,85)" stop-opacity="0.55"/></radialGradient><radialGradient id="g2_33" cx="0.5" cy="0.5" r="0.7071"><stop offset="0.1" stop-color="rgb(226,184,85)" stop-opacity="0.95"/><stop offset="1" stop-color="rgb(226,184,85)" stop-opacity="0.55"/></radialGradient><radialGradient id="g2_34" cx="0.5" cy="0.5" r="0.7071"><stop offset="0.1" stop-color="rgb(226,181,84)" stop-opacity="0.95"/><stop offset="1" stop-color="rgb(226,181,84)" stop-opacity="0.55"/></radialGradient><radialGradient id="g2_35" cx="0.5" cy="0.5" r="0.7071"><stop offset="0.1" stop-color="rgb(227,178,84)" stop-opacity="0.95"/><stop offset="1" stop-color="rgb(227,178,84)" stop-opacity="0.55"/></radialGradient><radialGradient id="g2_36" cx="0.5" cy="0.5" r="0.7071"><stop offset="0.1" stop-color="rgb(228,176,84)" stop-opacity="0.95"/><stop offset="1" stop-color="rgb(228,176,84)" stop-opacity="0.55"/></radialGradient><radialGradient id="g2_37" cx="0.5" cy="0.5" r="0.7071"><stop offset="0.1" stop-color="rgb(229,173,84)" stop-opacity="0.95"/><stop offset="1" stop-color="rgb(229,173,84)" stop-opacity="0.55"/></radialGradient><radialGradient id="g2_38" cx="0.5" cy="0.5" r="0.7071"><stop offset="0.1" stop-color="rgb(229,169,84)" stop-opacity="0.95"/><stop offset="1" stop-color="rgb(229,169,84)" stop-opacity="0.55"/></radialGradient><radialGradient id="g2_39" cx="0.5" cy="0.5" r="0.7071"><stop offset="0.1" stop-color="rgb(230,165,84)" stop-opacity="0.95"/><stop offset="1" stop-color="rgb(230,165,84)" stop-opacity="0.55"/></radialGradient><radialGradient id="g2_40" cx="0.5" cy="0.5" r="0.7071"><stop offset="0.1" stop-color="rgb(229,162,84)" stop-opacity="0.95"/><stop offset="1" stop-color="rgb(229,162,84)" stop-opacity="0.55"/></radialGradient><radialGradient id="g2_41" cx="0.5" cy="0.5" r="0.7071"><stop offset="0.1" stop-color="rgb(230,158,84)" stop-opacity="0.95"/><stop offset="1" stop-color="rgb(230,158,84)" stop-opacity="0.55"/></radialGradient><radialGradient id="g2_42" cx="0.5" cy="0.5" r="0.7071"><stop offset="0.1" stop-color="rgb(229,154,85)" stop-opacity="0.95"/><stop offset="1" stop-color="rgb(229,154,85)" stop-opacity="0.55"/></radialGradient><radialGradient id="g2_43" cx="0.5" cy="0.5" r="0.7071"><stop offset="0.1" stop-color="rgb(230,151,85)" stop-opacity="0.95"/><stop offset="1" stop-color="rgb(230,151,85)" stop-opacity="0.55"/></radialGradient><radialGradient id="g2_44" cx="0.5" cy="0.5" r="0.7071"><stop offset="0.1" stop-color="rgb(229,147,85)" stop-opacity="0.95"/><stop offset="1" stop-color="rgb(229,147,85)" stop-opacity="0.55"/></radialGradient><radialGradient id="g2_45" cx="0.5" cy="0.5" r="0.7071"><stop offset="0.1" stop-color="rgb(229,142,85)" stop-opacity="0.95"/><stop offset="1" stop-color="rgb(229,142,85)" stop-opacity="0.55"/></radialGradient><radialGradient id="g2_46" cx="0.5" cy="0.5" r="0.7071"><stop offset="0.1" stop-color="rgb(229,139,86)" stop-opacity="0.95"/><stop offset="1" stop-color="rgb(229,139,86)" stop-opacity="0.55"/></radialGradient><radialGradient id="g2_47" cx="0.5" cy="0.5" r="0.7071"><stop offset="0.1" stop-color="rgb(229,134,86)" stop-opacity="0.95"/><stop offset="1" stop-color="rgb(229,134,86)" stop-opacity="0.55"/></radialGradient><radialGradient id="g2_48" cx="0.5" cy="0.5" r="0.7071"><stop offset="0.1" stop-color="rgb(228,130,87)" stop-opacity="0.95"/><stop offset="1" stop-color="rgb(228,130,87)" stop-opacity="0.55"/></radialGradient><radialGradient id="g2_49" cx="0.5" cy="0.5" r="0.7071"><stop offset="0.1" stop-color="rgb(228,125,87)" stop-opacity="0.95"/><stop offset="1" stop-color="rgb(228,125,87)" stop-opacity="0.55"/></radialGradient><radialGradient id="g2_50" cx="0.5" cy="0.5" r="0.7071"><stop offset="0.1" stop-color="rgb(228,121,88)" stop-opacity="0.95"/><stop offset="1" stop-color="rgb(228,121,88)" stop-opacity="0.55"/></radialGradient><radialGradient id="g2_51" cx="0.5" cy="0.5" r="0.7071"><stop offset="0.1" stop-color="rgb(227,117,89)" stop-opacity="0.95"/><stop offset="1" stop-color="rgb(227,117,89)" stop-opacity="0.55"/></radialGradient><radialGradient id="g2_52" cx="0.5" cy="0.5" r="0.7071"><stop offset="0.1" stop-color="rgb(226,113,90)" stop-opacity="0.95"/><stop offset="1" stop-color="rgb(226,113,90)" stop-opacity="0.55"/></radialGradient><radialGradient id="g2_53" cx="0.5" cy="0.5" r="0.7071"><stop offset="0.1" stop-color="rgb(226,108,90)" stop-opacity="0.95"/><stop offset="1" stop-color="rgb(226,108,90)" stop-opacity="0.55"/></radialGradient><radialGradient id="g2_54" cx="0.5" cy="0.5" r="0.7071"><stop offset="0.1" stop-color="rgb(225,103,92)" stop-opacity="0.95"/><stop offset="1" stop-color="rgb(225,103,92)" stop-opacity="0.55"/></radialGradient><radialGradient id="g2_55" cx="0.5" cy="0.5" r="0.7071"><stop offset="0.1" stop-color="rgb(225,99,93)" stop-opacity="0.95"/><stop offset="1" stop-color="rgb(225,99,93)" stop-opacity="0.55"/></radialGradient><radialGradient id="g2_56" cx="0.5" cy="0.5" r="0.7071"><stop offset="0.1" stop-color="rgb(225,95,94)" stop-opacity="0.95"/><stop offset="1" stop-color="rgb(225,95,94)" stop-opacity="0.55"/></radialGradient><radialGradient id="g2_57" cx="0.5" cy="0.5" r="0.7071"><stop offset="0.1" stop-color="rgb(224,90,95)" stop-opacity="0.95"/><stop offset="1" stop-color="rgb(224,90,95)" stop-opacity="0.55"/></radialGradient></defs>
<text x="3219.79" y="315.50" font-family='"Liberation Sans", sans-serif' font-size="64.50" font-weight="normal" fill="#85bd72" textLength="122.77" lengthAdjust="spacing" stroke="#85bd72" stroke-width="1.0" >12.9</text>
<text x="3351.38" y="315.50" font-family='"Liberation Sans", sans-serif' font-size="39.50" font-weight="normal" fill="#85bd72" textLength="52.85" lengthAdjust="spacing" stroke="#85bd72" stroke-width="0.7" >ms</text>
<text x="3224.54" y="429.70" font-family='"Liberation Sans", sans-serif' font-size="64.50" font-weight="normal" fill="#85bd72" textLength="128.29" lengthAdjust="spacing" stroke="#85bd72" stroke-width="1.0" >33.6</text>
<text x="3361.78" y="429.70" font-family='"Liberation Sans", sans-serif' font-size="39.50" font-weight="normal" fill="#85bd72" textLength="52.65" lengthAdjust="spacing" stroke="#85bd72" stroke-width="0.7" >ms</text>
<text x="3223.76" y="545.20" font-family='"Liberation Sans", sans-serif' font-size="64.50" font-weight="normal" fill="#e05660" textLength="128.95" lengthAdjust="spacing" stroke="#e05660" stroke-width="1.0" >2.95</text>
<text x="3365.40" y="545.20" font-family='"Liberation Sans", sans-serif' font-size="39.50" font-weight="normal" fill="#e05660" stroke="#e05660" stroke-width="0.7" >s</text>
<rect x="33.00" y="589.00" width="570.00" height="514.00" fill="#191b1f" rx="11" stroke="#323338" stroke-width="2" />
<text x="50.64" y="632.30" font-family='"Liberation Sans", sans-serif' font-size="29.60" font-weight="normal" fill="#ccccdb" textLength="224.43" lengthAdjust="spacing" stroke="#ccccdb" stroke-width="0.9" >Total Exceptions</text>
<circle cx="321" cy="622" r="10.3" fill="none" stroke="#799ef8" stroke-width="2.2"/>
<path d="M321.5 616.335 V622.6 H317.91" fill="none" stroke="#799ef8" stroke-width="2.2" stroke-linecap="round" stroke-linejoin="round"/>
<text x="350.17" y="632.30" font-family='"Liberation Sans", sans-serif' font-size="29.60" font-weight="normal" fill="#799ef8" textLength="185.50" lengthAdjust="spacing" stroke="#799ef8" stroke-width="0.35" >Last 24 hours</text>
<text x="64.77" y="926.00" font-family='"Liberation Sans", sans-serif' font-size="143.00" font-weight="normal" fill="#85bd72" textLength="495.03" lengthAdjust="spacing" stroke="#85bd72" stroke-width="1.8" >No data</text>
<rect x="621.00" y="589.00" width="1450.00" height="514.00" fill="#191b1f" rx="11" stroke="#323338" stroke-width="2" />
<text x="635.77" y="632.30" font-family='"Liberation Sans", sans-serif' font-size="29.60" font-weight="normal" fill="#ccccdb" textLength="335.30" lengthAdjust="spacing" stroke="#ccccdb" stroke-width="0.9" >Percent of 2xx Requests</text>
<rect x="720.00" y="686.00" width="1318.40" height="58.90" fill="#85bd72" fill-opacity="0.15"/>
<rect x="720.00" y="744.90" width="1318.40" height="235.60" fill="#e05660" fill-opacity="0.15"/>
<line x1="720" y1="686.00" x2="2038.4" y2="686.00" stroke="rgba(242,250,254,0.09)" stroke-width="1"/>
<line x1="720" y1="744.90" x2="2038.4" y2="744.90" stroke="rgba(242,250,254,0.09)" stroke-width="1"/>
<line x1="720" y1="803.80" x2="2038.4" y2="803.80" stroke="rgba(242,250,254,0.09)" stroke-width="1"/>
<line x1="720" y1="862.70" x2="2038.4" y2="862.70" stroke="rgba(242,250,254,0.09)" stroke-width="1"/>
<line x1="720" y1="921.60" x2="2038.4" y2="921.60" stroke="rgba(242,250,254,0.09)" stroke-width="1"/>
<line x1="720" y1="980.50" x2="2038.4" y2="980.50" stroke="rgba(242,250,254,0.09)" stroke-width="1"/>
<line x1="877.00" y1="686" x2="877.00" y2="988.5" stroke="rgba(242,250,254,0.09)" stroke-width="1"/>
<line x1="1140.50" y1="686" x2="1140.50" y2="988.5" stroke="rgba(242,250,254,0.09)" stroke-width="1"/>
<line x1="1404.00" y1="686" x2="1404.00" y2="988.5" stroke="rgba(242,250,254,0.09)" stroke-width="1"/>
<line x1="1667.50" y1="686" x2="1667.50" y2="988.5" stroke="rgba(242,250,254,0.09)" stroke-width="1"/>
<line x1="1931.00" y1="686" x2="1931.00" y2="988.5" stroke="rgba(242,250,254,0.09)" stroke-width="1"/>
<text x="643.09" y="693.30" font-family='"Liberation Sans", sans-serif' font-size="25.50" font-weight="normal" fill="#ccccdb" textLength="65.22" lengthAdjust="spacing" stroke="#ccccdb" stroke-width="0.3" >100%</text>
<text x="657.27" y="752.20" font-family='"Liberation Sans", sans-serif' font-size="25.50" font-weight="normal" fill="#ccccdb" textLength="51.04" lengthAdjust="spacing" stroke="#ccccdb" stroke-width="0.3" >80%</text>
<text x="657.27" y="811.10" font-family='"Liberation Sans", sans-serif' font-size="25.50" font-weight="normal" fill="#ccccdb" textLength="51.04" lengthAdjust="spacing" stroke="#ccccdb" stroke-width="0.3" >60%</text>
<text x="657.27" y="870.00" font-family='"Liberation Sans", sans-serif' font-size="25.50" font-weight="normal" fill="#ccccdb" textLength="51.04" lengthAdjust="spacing" stroke="#ccccdb" stroke-width="0.3" >40%</text>
<text x="657.27" y="928.90" font-family='"Liberation Sans", sans-serif' font-size="25.50" font-weight="normal" fill="#ccccdb" textLength="51.04" lengthAdjust="spacing" stroke="#ccccdb" stroke-width="0.3" >20%</text>
<text x="671.45" y="987.80" font-family='"Liberation Sans", sans-serif' font-size="25.50" font-weight="normal" fill="#ccccdb" textLength="36.86" lengthAdjust="spacing" stroke="#ccccdb" stroke-width="0.3" >0%</text>
<text x="823.90" y="1017.20" font-family='"Liberation Sans", sans-serif' font-size="25.50" font-weight="normal" fill="#ccccdb" textLength="106.19" lengthAdjust="spacing" stroke="#ccccdb" stroke-width="0.3" >02:40:00</text>
<text x="1087.40" y="1017.20" font-family='"Liberation Sans", sans-serif' font-size="25.50" font-weight="normal" fill="#ccccdb" textLength="106.19" lengthAdjust="spacing" stroke="#ccccdb" stroke-width="0.3" >02:41:00</text>
<text x="1350.90" y="1017.20" font-family='"Liberation Sans", sans-serif' font-size="25.50" font-weight="normal" fill="#ccccdb" textLength="106.19" lengthAdjust="spacing" stroke="#ccccdb" stroke-width="0.3" >02:42:00</text>
<text x="1614.40" y="1017.20" font-family='"Liberation Sans", sans-serif' font-size="25.50" font-weight="normal" fill="#ccccdb" textLength="106.19" lengthAdjust="spacing" stroke="#ccccdb" stroke-width="0.3" >02:43:00</text>
<text x="1877.90" y="1017.20" font-family='"Liberation Sans", sans-serif' font-size="25.50" font-weight="normal" fill="#ccccdb" textLength="106.19" lengthAdjust="spacing" stroke="#ccccdb" stroke-width="0.3" >02:44:00</text>
<line x1="718.9" y1="686" x2="1996.88" y2="686" stroke="#eccd47" stroke-width="2.2"/>
<circle cx="745.25" cy="686" r="5" fill="#eccd47"/>
<circle cx="811.12" cy="686" r="5" fill="#eccd47"/>
<circle cx="877.00" cy="686" r="5" fill="#eccd47"/>
<circle cx="942.88" cy="686" r="5" fill="#eccd47"/>
<circle cx="1008.75" cy="686" r="5" fill="#eccd47"/>
<circle cx="1074.62" cy="686" r="5" fill="#eccd47"/>
<circle cx="1140.50" cy="686" r="5" fill="#eccd47"/>
<circle cx="1206.38" cy="686" r="5" fill="#eccd47"/>
<circle cx="1272.25" cy="686" r="5" fill="#eccd47"/>
<circle cx="1338.12" cy="686" r="5" fill="#eccd47"/>
<circle cx="1404.00" cy="686" r="5" fill="#eccd47"/>
<circle cx="1469.88" cy="686" r="5" fill="#eccd47"/>
<circle cx="1535.75" cy="686" r="5" fill="#eccd47"/>
<circle cx="1601.62" cy="686" r="5" fill="#eccd47"/>
<circle cx="1667.50" cy="686" r="5" fill="#eccd47"/>
<circle cx="1733.38" cy="686" r="5" fill="#eccd47"/>
<circle cx="1799.25" cy="686" r="5" fill="#eccd47"/>
<circle cx="1865.12" cy="686" r="5" fill="#eccd47"/>
<circle cx="1931.00" cy="686" r="5" fill="#eccd47"/>
<circle cx="1996.88" cy="686" r="5" fill="#eccd47"/>
<rect x="645.90" y="1055.20" width="28.10" height="7.60" fill="#85bd72" rx="3.8" />
<path d="M695.61 1048.10 L698.16 1048.10 L692.96 1069.42 L690.20 1069.42 Z" fill="#ccccdb"/>
<path d="M704.76 1048.83 L704.76 1059.23 M700.13 1051.67 L709.39 1056.39 M700.13 1056.39 L709.39 1051.67 " stroke="#ccccdb" stroke-width="2.29" fill="none"/>
<path d="M717.19 1048.83 L717.19 1059.23 M712.55 1051.67 L721.82 1056.39 M712.55 1056.39 L721.82 1051.67 " stroke="#ccccdb" stroke-width="2.29" fill="none"/>
<rect x="742.80" y="1055.20" width="28.20" height="7.60" fill="#eccd47" rx="3.8" />
<text x="787.90" y="1067.60" font-family='"Liberation Sans", sans-serif' font-size="26.00" font-weight="normal" fill="#ccccdb" textLength="191.26" lengthAdjust="spacing" stroke="#ccccdb" stroke-width="0.3" >/api/auth/google</text>
<rect x="2087.00" y="589.00" width="1450.00" height="514.00" fill="#191b1f" rx="11" stroke="#323338" stroke-width="2" />
<text x="2102.67" y="632.30" font-family='"Liberation Sans", sans-serif' font-size="29.60" font-weight="normal" fill="#ccccdb" textLength="334.40" lengthAdjust="spacing" stroke="#ccccdb" stroke-width="0.9" >Percent of 5xx Requests</text>
<text x="2743.62" y="891.10" font-family='"Liberation Sans", sans-serif' font-size="38.80" font-weight="normal" fill="#91929d" textLength="133.48" lengthAdjust="spacing" stroke="#91929d" stroke-width="0.6" >No data</text>
<rect x="33.00" y="1121.00" width="1156.00" height="590.00" fill="#191b1f" rx="11" stroke="#323338" stroke-width="2" />
<text x="48.97" y="1164.20" font-family='"Liberation Sans", sans-serif' font-size="29.60" font-weight="normal" fill="#ccccdb" textLength="339.95" lengthAdjust="spacing" stroke="#ccccdb" stroke-width="0.9" >PR 99 Requests Duration</text>
<text x="542.97" y="1461.00" font-family='"Liberation Sans", sans-serif' font-size="38.80" font-weight="normal" fill="#91929d" textLength="133.48" lengthAdjust="spacing" stroke="#91929d" stroke-width="0.6" >No data</text>
<rect x="1207.00" y="1121.00" width="1156.00" height="590.00" fill="#191b1f" rx="11" stroke="#323338" stroke-width="2" />
<text x="1222.97" y="1164.20" font-family='"Liberation Sans", sans-serif' font-size="29.60" font-weight="normal" fill="#ccccdb" textLength="340.05" lengthAdjust="spacing" stroke="#ccccdb" stroke-width="0.9" >PR 95 Requests Duration</text>
<text x="1715.87" y="1461.00" font-family='"Liberation Sans", sans-serif' font-size="38.80" font-weight="normal" fill="#91929d" textLength="133.48" lengthAdjust="spacing" stroke="#91929d" stroke-width="0.6" >No data</text>
<rect x="2381.00" y="1121.00" width="1156.00" height="590.00" fill="#191b1f" rx="11" stroke="#323338" stroke-width="2" />
<text x="2397.17" y="1164.20" font-family='"Liberation Sans", sans-serif' font-size="29.60" font-weight="normal" fill="#ccccdb" textLength="225.31" lengthAdjust="spacing" stroke="#ccccdb" stroke-width="0.9" >Request Per Sec</text>
<line x1="2534.3" y1="1588.00" x2="3504.4" y2="1588.00" stroke="rgba(242,250,254,0.09)" stroke-width="1"/>
<line x1="2534.3" y1="1488.20" x2="3504.4" y2="1488.20" stroke="rgba(242,250,254,0.09)" stroke-width="1"/>
<line x1="2534.3" y1="1388.40" x2="3504.4" y2="1388.40" stroke="rgba(242,250,254,0.09)" stroke-width="1"/>
<line x1="2534.3" y1="1288.60" x2="3504.4" y2="1288.60" stroke="rgba(242,250,254,0.09)" stroke-width="1"/>
<line x1="2649.30" y1="1218.5" x2="2649.30" y2="1596" stroke="rgba(242,250,254,0.09)" stroke-width="1"/>
<line x1="2843.30" y1="1218.5" x2="2843.30" y2="1596" stroke="rgba(242,250,254,0.09)" stroke-width="1"/>
<line x1="3037.30" y1="1218.5" x2="3037.30" y2="1596" stroke="rgba(242,250,254,0.09)" stroke-width="1"/>
<line x1="3231.30" y1="1218.5" x2="3231.30" y2="1596" stroke="rgba(242,250,254,0.09)" stroke-width="1"/>
<line x1="3425.30" y1="1218.5" x2="3425.30" y2="1596" stroke="rgba(242,250,254,0.09)" stroke-width="1"/>
<text x="2440.40" y="1594.70" font-family='"Liberation Sans", sans-serif' font-size="25.50" font-weight="normal" fill="#ccccdb" textLength="83.62" lengthAdjust="spacing" stroke="#ccccdb" stroke-width="0.3" >0 req/s</text>
<text x="2404.50" y="1494.90" font-family='"Liberation Sans", sans-serif' font-size="25.50" font-weight="normal" fill="#ccccdb" textLength="119.52" lengthAdjust="spacing" stroke="#ccccdb" stroke-width="0.3" >0.02 req/s</text>
<text x="2404.50" y="1395.10" font-family='"Liberation Sans", sans-serif' font-size="25.50" font-weight="normal" fill="#ccccdb" textLength="119.52" lengthAdjust="spacing" stroke="#ccccdb" stroke-width="0.3" >0.04 req/s</text>
<text x="2404.50" y="1295.30" font-family='"Liberation Sans", sans-serif' font-size="25.50" font-weight="normal" fill="#ccccdb" textLength="119.52" lengthAdjust="spacing" stroke="#ccccdb" stroke-width="0.3" >0.06 req/s</text>
<text x="2595.80" y="1624.70" font-family='"Liberation Sans", sans-serif' font-size="25.50" font-weight="normal" fill="#ccccdb" textLength="106.99" lengthAdjust="spacing" stroke="#ccccdb" stroke-width="0.3" >02:40:00</text>
<text x="2789.80" y="1624.70" font-family='"Liberation Sans", sans-serif' font-size="25.50" font-weight="normal" fill="#ccccdb" textLength="106.99" lengthAdjust="spacing" stroke="#ccccdb" stroke-width="0.3" >02:41:00</text>
<text x="2983.80" y="1624.70" font-family='"Liberation Sans", sans-serif' font-size="25.50" font-weight="normal" fill="#ccccdb" textLength="106.99" lengthAdjust="spacing" stroke="#ccccdb" stroke-width="0.3" >02:42:00</text>
<text x="3177.80" y="1624.70" font-family='"Liberation Sans", sans-serif' font-size="25.50" font-weight="normal" fill="#ccccdb" textLength="106.99" lengthAdjust="spacing" stroke="#ccccdb" stroke-width="0.3" >02:43:00</text>
<text x="3371.80" y="1624.70" font-family='"Liberation Sans", sans-serif' font-size="25.50" font-weight="normal" fill="#ccccdb" textLength="106.99" lengthAdjust="spacing" stroke="#ccccdb" stroke-width="0.3" >02:44:00</text>
<line x1="2532.9" y1="1255" x2="3473.80" y2="1255" stroke="#85bd72" stroke-width="2.2"/>
<line x1="2532.9" y1="1255" x2="3473.80" y2="1255" stroke="#eccd47" stroke-width="2.2"/>
<circle cx="2552.30" cy="1255" r="5.1" fill="#eccd47"/>
<circle cx="2600.80" cy="1255" r="5.1" fill="#eccd47"/>
<circle cx="2649.30" cy="1255" r="5.1" fill="#eccd47"/>
<circle cx="2697.80" cy="1255" r="5.1" fill="#eccd47"/>
<circle cx="2746.30" cy="1255" r="5.1" fill="#eccd47"/>
<circle cx="2794.80" cy="1255" r="5.1" fill="#eccd47"/>
<circle cx="2843.30" cy="1255" r="5.1" fill="#eccd47"/>
<circle cx="2891.80" cy="1255" r="5.1" fill="#eccd47"/>
<circle cx="2940.30" cy="1255" r="5.1" fill="#eccd47"/>
<circle cx="2988.80" cy="1255" r="5.1" fill="#eccd47"/>
<circle cx="3037.30" cy="1255" r="5.1" fill="#eccd47"/>
<circle cx="3085.80" cy="1255" r="5.1" fill="#eccd47"/>
<circle cx="3134.30" cy="1255" r="5.1" fill="#eccd47"/>
<circle cx="3182.80" cy="1255" r="5.1" fill="#eccd47"/>
<circle cx="3231.30" cy="1255" r="5.1" fill="#eccd47"/>
<circle cx="3279.80" cy="1255" r="5.1" fill="#eccd47"/>
<circle cx="3328.30" cy="1255" r="5.1" fill="#eccd47"/>
<circle cx="3376.80" cy="1255" r="5.1" fill="#eccd47"/>
<circle cx="3425.30" cy="1255" r="5.1" fill="#eccd47"/>
<circle cx="3473.80" cy="1255" r="5.1" fill="#eccd47"/>
<line x1="2532.9" y1="1588" x2="3473.80" y2="1588" stroke="#6592eb" stroke-width="2.2"/>
<circle cx="2552.30" cy="1588" r="5.1" fill="#6592eb"/>
<circle cx="2600.80" cy="1588" r="5.1" fill="#6592eb"/>
<circle cx="2649.30" cy="1588" r="5.1" fill="#6592eb"/>
<circle cx="2697.80" cy="1588" r="5.1" fill="#6592eb"/>
<circle cx="2746.30" cy="1588" r="5.1" fill="#6592eb"/>
<circle cx="2794.80" cy="1588" r="5.1" fill="#6592eb"/>
<circle cx="2843.30" cy="1588" r="5.1" fill="#6592eb"/>
<circle cx="2891.80" cy="1588" r="5.1" fill="#6592eb"/>
<circle cx="2940.30" cy="1588" r="5.1" fill="#6592eb"/>
<circle cx="2988.80" cy="1588" r="5.1" fill="#6592eb"/>
<circle cx="3037.30" cy="1588" r="5.1" fill="#6592eb"/>
<circle cx="3085.80" cy="1588" r="5.1" fill="#6592eb"/>
<circle cx="3134.30" cy="1588" r="5.1" fill="#6592eb"/>
<circle cx="3182.80" cy="1588" r="5.1" fill="#6592eb"/>
<circle cx="3231.30" cy="1588" r="5.1" fill="#6592eb"/>
<circle cx="3279.80" cy="1588" r="5.1" fill="#6592eb"/>
<circle cx="3328.30" cy="1588" r="5.1" fill="#6592eb"/>
<circle cx="3376.80" cy="1588" r="5.1" fill="#6592eb"/>
<circle cx="3425.30" cy="1588" r="5.1" fill="#6592eb"/>
<circle cx="3473.80" cy="1588" r="5.1" fill="#6592eb"/>
<rect x="2406.10" y="1663.00" width="27.80" height="7.80" fill="#85bd72" rx="3.9" />
<path d="M2455.96 1655.00 L2458.48 1655.00 L2453.33 1676.12 L2450.60 1676.12 Z" fill="#ccccdb"/>
<path d="M2465.02 1655.72 L2465.02 1666.02 M2460.43 1658.53 L2469.61 1663.21 M2460.43 1663.21 L2469.61 1658.53 " stroke="#ccccdb" stroke-width="2.27" fill="none"/>
<path d="M2477.33 1655.72 L2477.33 1666.02 M2472.74 1658.53 L2481.92 1663.21 M2472.74 1663.21 L2481.92 1658.53 " stroke="#ccccdb" stroke-width="2.27" fill="none"/>
<rect x="2503.00" y="1663.00" width="27.80" height="7.80" fill="#eccd47" rx="3.9" />
<text x="2547.80" y="1674.60" font-family='"Liberation Sans", sans-serif' font-size="26.00" font-weight="normal" fill="#ccccdb" textLength="250.14" lengthAdjust="spacing" stroke="#ccccdb" stroke-width="0.3" >/actuator/prometheus</text>
<rect x="2818.30" y="1663.00" width="27.80" height="7.80" fill="#6592eb" rx="3.9" />
<text x="2862.80" y="1674.60" font-family='"Liberation Sans", sans-serif' font-size="26.00" font-weight="normal" fill="#ccccdb" textLength="191.36" lengthAdjust="spacing" stroke="#ccccdb" stroke-width="0.3" >/api/auth/google</text>
<rect x="33.00" y="1729.00" width="862.00" height="392.00" fill="#191b1f" rx="11" stroke="#323338" stroke-width="2" />
<text x="48.07" y="1772.20" font-family='"Liberation Sans", sans-serif' font-size="29.60" font-weight="normal" fill="#ccccdb" textLength="196.84" lengthAdjust="spacing" stroke="#ccccdb" stroke-width="0.9" >Log Type Rate</text>
<line x1="106.2" y1="1881.50" x2="862.4" y2="1881.50" stroke="rgba(242,250,254,0.09)" stroke-width="1"/>
<text x="59.10" y="1888.20" font-family='"Liberation Sans", sans-serif' font-size="25.50" font-weight="normal" fill="#ccccdb" textLength="36.67" lengthAdjust="spacing" stroke="#ccccdb" stroke-width="0.3" >0.5</text>
<line x1="106.2" y1="1959.40" x2="862.4" y2="1959.40" stroke="rgba(242,250,254,0.09)" stroke-width="1"/>
<text x="58.20" y="1966.10" font-family='"Liberation Sans", sans-serif' font-size="25.50" font-weight="normal" fill="#ccccdb" textLength="37.24" lengthAdjust="spacing" stroke="#ccccdb" stroke-width="0.3" >0.4</text>
<line x1="106.2" y1="2037.30" x2="862.4" y2="2037.30" stroke="rgba(242,250,254,0.09)" stroke-width="1"/>
<text x="59.10" y="2044.00" font-family='"Liberation Sans", sans-serif' font-size="25.50" font-weight="normal" fill="#ccccdb" textLength="36.72" lengthAdjust="spacing" stroke="#ccccdb" stroke-width="0.3" >0.3</text>
<line x1="106.2" y1="2115.20" x2="862.4" y2="2115.20" stroke="rgba(242,250,254,0.09)" stroke-width="1"/>
<text x="59.10" y="2121.90" font-family='"Liberation Sans", sans-serif' font-size="25.50" font-weight="normal" fill="#ccccdb" textLength="36.88" lengthAdjust="spacing" stroke="#ccccdb" stroke-width="0.3" >0.2</text>
<line x1="196.3" y1="1826.8" x2="196.3" y2="2082" stroke="rgba(242,250,254,0.09)" stroke-width="1"/>
<line x1="347.5" y1="1826.8" x2="347.5" y2="2082" stroke="rgba(242,250,254,0.09)" stroke-width="1"/>
<line x1="498.6" y1="1826.8" x2="498.6" y2="2082" stroke="rgba(242,250,254,0.09)" stroke-width="1"/>
<line x1="649.4" y1="1826.8" x2="649.4" y2="2082" stroke="rgba(242,250,254,0.09)" stroke-width="1"/>
<line x1="801.4" y1="1826.8" x2="801.4" y2="2082" stroke="rgba(242,250,254,0.09)" stroke-width="1"/>
<path d="M653.5 1867.8 H797.9 V1907 H799.1 V2082 H652.2 V1907 H653.5 Z" fill="#eccd47"/>
<path d="M654 1907 H797 V1946 H799.1 V1998 H797.9 V2037.5 H800 V2077 H801.4 V2082 H648.1 V2063 H649.6 V2050 H650.8 V2011 H652.2 V1946 H654 Z" fill="#85bd72"/>
<rect x="913.00" y="1729.00" width="2624.00" height="392.00" fill="#191b1f" rx="11" stroke="#323338" stroke-width="2" />
<text x="928.97" y="1772.20" font-family='"Liberation Sans", sans-serif' font-size="29.60" font-weight="normal" fill="#ccccdb" textLength="377.10" lengthAdjust="spacing" stroke="#ccccdb" stroke-width="0.9" >Log of All Spring Boot Apps</text>
<circle cx="953.9" cy="1822.40" r="3" fill="#ccccdb"/>
<circle cx="953.9" cy="1831.70" r="3" fill="#ccccdb"/>
<circle cx="953.9" cy="1841.00" r="3" fill="#ccccdb"/>
<text x="978.70" y="1842.00" font-family='"Liberation Mono", monospace' font-size="28.53" font-weight="bold" fill="#85cd94" stroke="#85cd94" stroke-width="0.1" xml:space="preserve">INFO</text>
<text x="1069.30" y="1842.00" font-family='"Liberation Mono", monospace' font-size="28.53" font-weight="normal" fill="#ccccdb" stroke="#ccccdb" stroke-width="0.4" xml:space="preserve">grit</text>
<text x="1252.10" y="1842.00" font-family='"Liberation Mono", monospace' font-size="28.53" font-weight="normal" fill="#ccccdb" stroke="#ccccdb" stroke-width="0.4" xml:space="preserve">INFO</text>
<text x="1387.80" y="1842.00" font-family='"Liberation Mono", monospace' font-size="28.53" fill="#ccccdb" stroke-width="0.4" xml:space="preserve"><tspan fill="#8e8e9a" stroke="#8e8e9a">trace_id</tspan><tspan fill="#ccccdb" stroke="#ccccdb">=NONE</tspan></text>
<text x="1660.00" y="1842.00" font-family='"Liberation Mono", monospace' font-size="28.53" font-weight="normal" fill="#ccccdb" stroke="#ccccdb" stroke-width="0.4" xml:space="preserve">o.s.web.servlet.DispatcherServlet - Completed initialization in 1 ms</text>
<circle cx="953.9" cy="1878.30" r="3" fill="#ccccdb"/>
<circle cx="953.9" cy="1887.60" r="3" fill="#ccccdb"/>
<circle cx="953.9" cy="1896.90" r="3" fill="#ccccdb"/>
<text x="978.70" y="1897.90" font-family='"Liberation Mono", monospace' font-size="28.53" font-weight="bold" fill="#85cd94" stroke="#85cd94" stroke-width="0.1" xml:space="preserve">INFO</text>
<text x="1069.30" y="1897.90" font-family='"Liberation Mono", monospace' font-size="28.53" font-weight="normal" fill="#ccccdb" stroke="#ccccdb" stroke-width="0.4" xml:space="preserve">grit</text>
<text x="1252.10" y="1897.90" font-family='"Liberation Mono", monospace' font-size="28.53" font-weight="normal" fill="#ccccdb" stroke="#ccccdb" stroke-width="0.4" xml:space="preserve">INFO</text>
<text x="1387.80" y="1897.90" font-family='"Liberation Mono", monospace' font-size="28.53" fill="#ccccdb" stroke-width="0.4" xml:space="preserve"><tspan fill="#8e8e9a" stroke="#8e8e9a">trace_id</tspan><tspan fill="#ccccdb" stroke="#ccccdb">=NONE</tspan></text>
<text x="1660.00" y="1897.90" font-family='"Liberation Mono", monospace' font-size="28.53" font-weight="normal" fill="#ccccdb" stroke="#ccccdb" stroke-width="0.4" xml:space="preserve">o.s.web.servlet.DispatcherServlet - Initializing Servlet 'dispatcherServlet'</text>
<circle cx="953.9" cy="1934.20" r="3" fill="#ccccdb"/>
<circle cx="953.9" cy="1943.50" r="3" fill="#ccccdb"/>
<circle cx="953.9" cy="1952.80" r="3" fill="#ccccdb"/>
<text x="978.70" y="1953.80" font-family='"Liberation Mono", monospace' font-size="28.53" font-weight="bold" fill="#85cd94" stroke="#85cd94" stroke-width="0.1" xml:space="preserve">INFO</text>
<text x="1069.30" y="1953.80" font-family='"Liberation Mono", monospace' font-size="28.53" font-weight="normal" fill="#ccccdb" stroke="#ccccdb" stroke-width="0.4" xml:space="preserve">grit</text>
<text x="1252.10" y="1953.80" font-family='"Liberation Mono", monospace' font-size="28.53" font-weight="normal" fill="#ccccdb" stroke="#ccccdb" stroke-width="0.4" xml:space="preserve">INFO</text>
<text x="1387.80" y="1953.80" font-family='"Liberation Mono", monospace' font-size="28.53" fill="#ccccdb" stroke-width="0.4" xml:space="preserve"><tspan fill="#8e8e9a" stroke="#8e8e9a">trace_id</tspan><tspan fill="#ccccdb" stroke="#ccccdb">=NONE</tspan></text>
<text x="1660.00" y="1953.80" font-family='"Liberation Mono", monospace' font-size="28.53" font-weight="normal" fill="#ccccdb" stroke="#ccccdb" stroke-width="0.4" xml:space="preserve">o.a.c.c.C.[Tomcat].[localhost].[/] - Initializing Spring DispatcherServlet 'dispatcherServlet'</text>
<circle cx="953.9" cy="1990.10" r="3" fill="#ccccdb"/>
<circle cx="953.9" cy="1999.40" r="3" fill="#ccccdb"/>
<circle cx="953.9" cy="2008.70" r="3" fill="#ccccdb"/>
<text x="978.70" y="2009.70" font-family='"Liberation Mono", monospace' font-size="28.53" font-weight="bold" fill="#f0b051" stroke="#f0b051" stroke-width="0.1" xml:space="preserve">WARN</text>
<text x="1069.30" y="2009.70" font-family='"Liberation Mono", monospace' font-size="28.53" font-weight="normal" fill="#ccccdb" stroke="#ccccdb" stroke-width="0.4" xml:space="preserve">grit</text>
<text x="1252.10" y="2009.70" font-family='"Liberation Mono", monospace' font-size="28.53" font-weight="normal" fill="#ccccdb" stroke="#ccccdb" stroke-width="0.4" xml:space="preserve">WARN</text>
<text x="1387.80" y="2009.70" font-family='"Liberation Mono", monospace' font-size="28.53" fill="#ccccdb" stroke-width="0.4" xml:space="preserve"><tspan fill="#8e8e9a" stroke="#8e8e9a">trace_id</tspan><tspan fill="#ccccdb" stroke="#ccccdb">=NONE</tspan></text>
<text x="1660.00" y="2009.70" font-family='"Liberation Mono", monospace' font-size="28.53" font-weight="normal" fill="#ccccdb" stroke="#ccccdb" stroke-width="0.4" xml:space="preserve">o.s.c.events.SpringDocAppInitializer - SpringDoc /swagger-ui.html endpoint is enabled by default. To disab</text>
<text x="977.60" y="2053.80" font-family='"Liberation Mono", monospace' font-size="28.53" fill="#ccccdb" stroke-width="0.4" xml:space="preserve"><tspan fill="#ccccdb" stroke="#ccccdb">le it in production, set the property 'springdoc.swagger-ui.</tspan><tspan fill="#8e8e9a" stroke="#8e8e9a">enabled</tspan><tspan fill="#ccccdb" stroke="#ccccdb">=false'</tspan></text>
<rect x="3490.00" y="1810.00" width="30.00" height="300.00" fill="#2c2c2d" />
<rect x="3490.00" y="1810.00" width="2.40" height="300.00" fill="#3e3e40" />
<rect x="3517.60" y="1810.00" width="2.40" height="300.00" fill="#505052" />
<rect x="3498.00" y="1815.70" width="16.00" height="107.50" fill="#6b6b6b" rx="8" />
</svg>
</body></html>
